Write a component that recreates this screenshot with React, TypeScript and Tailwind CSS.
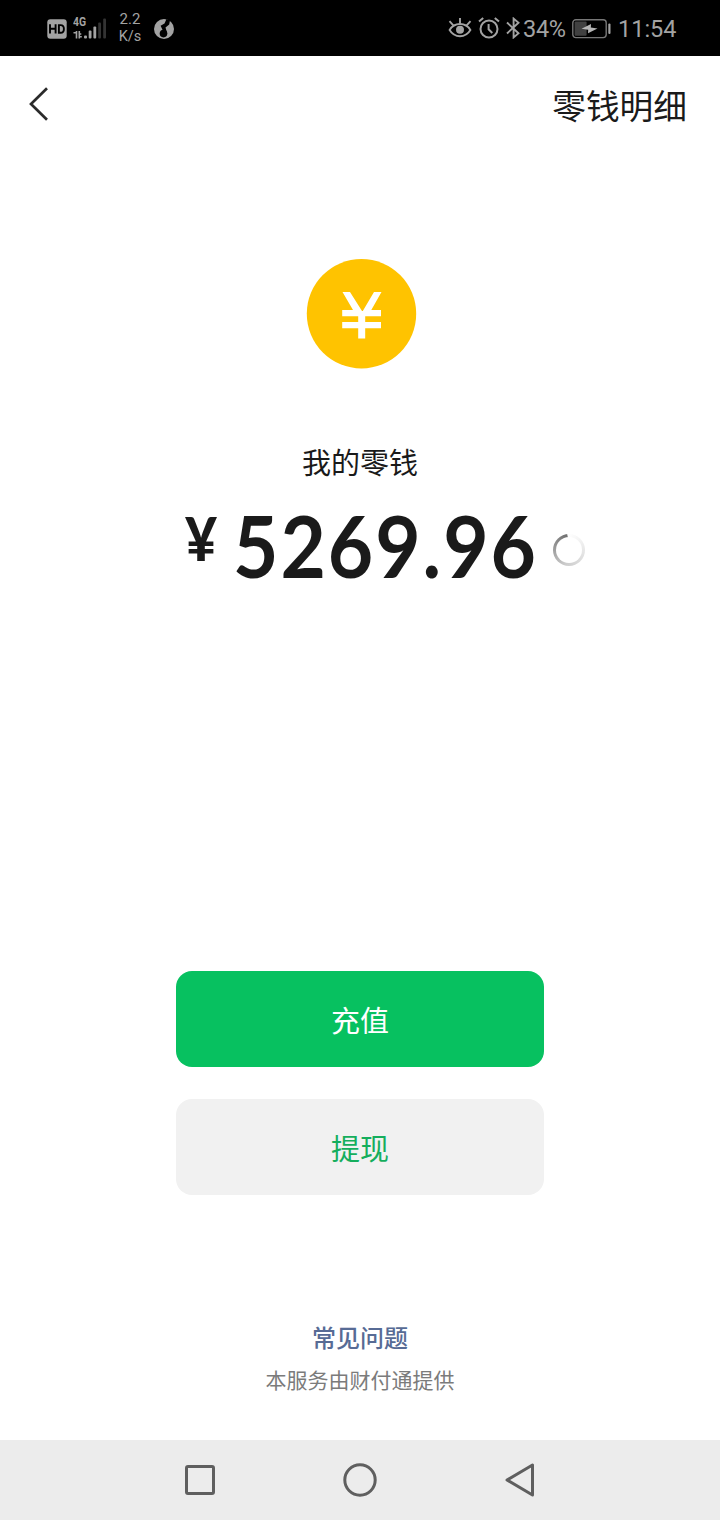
import type { ReactNode } from "react";

function HdIcon() {
  return (
    <svg className="ml-[47px] h-[20px] w-[20px] shrink-0" viewBox="0 0 20 20" fill="none">
      <rect x="0.3" y="0.3" width="19.4" height="19.4" rx="3" fill="#a3a3a3" />
      <path d="M3 5.200v9.400M8.600 5.200v9.400M3 9.800h5.600" stroke="#000" strokeWidth="1.900" />
      <path d="M11.900 6.100h1.700c2.200 0 3.300 1.200 3.300 3.800s-1.100 3.800-3.300 3.800h-1.700z" stroke="#000" strokeWidth="1.900" />
    </svg>
  );
}

function SignalIcon() {
  return (
    <div className="relative ml-[6px] h-[24px] w-[34px] shrink-0">
      <span className="absolute -top-[2px] left-0 origin-left scale-x-80 font-['Roboto',sans-serif] text-[13px] leading-[14px] font-bold text-[#a3a3a3]">
        4G
      </span>
      <svg className="h-[24px] w-[34px]" viewBox="0 0 34 24" fill="none">
        <path d="M0.500 15.800h2.500M3.500 14v7.500M6.300 14v7.500M6.300 19.800h2.500M6.300 17h2" stroke="#a3a3a3" strokeWidth="1.600" />
        <rect x="11" y="18.500" width="3" height="3" rx="1" fill="#a3a3a3" />
        <rect x="15.700" y="13.500" width="2.800" height="8" rx="1" fill="#a3a3a3" />
        <rect x="20.400" y="9.500" width="2.800" height="12" rx="1" fill="#a3a3a3" />
        <rect x="25.200" y="5.500" width="2.800" height="16" rx="1" fill="#333" />
        <rect x="30.200" y="1.500" width="2.800" height="20" rx="1" fill="#333" />
      </svg>
    </div>
  );
}

function MusicIcon() {
  return (
    <svg className="ml-[12px] h-[20px] w-[20px] shrink-0" viewBox="0 0 20 20">
      <circle cx="10" cy="10" r="10" fill="#a3a3a3" />
      <circle cx="9.500" cy="14.600" r="3.800" fill="#000" />
      <path d="M12.500 0L16 1.200 15.200 5.500 11.500 8.500 13.300 14.600 10 14 6.600 6.800 10.500 4.600z" fill="#000" />
    </svg>
  );
}

function StatusBar() {
  return (
    <header className="flex h-14 items-center bg-black pt-[2px] font-['Roboto',sans-serif] text-[#a3a3a3]">
      <HdIcon />
      <SignalIcon />
      <div className="ml-[11px] w-[24px] -translate-y-[1px] text-center text-[15px] leading-[18px]">
        <div>2.2</div>
        <div className="text-[14.500px]">K/s</div>
      </div>
      <MusicIcon />
      <div className="ml-auto flex items-center pr-[44px]">
        <svg className="h-[22px] w-[24px] -translate-y-[1px]" viewBox="0 0 24 22" fill="none" stroke="#a3a3a3" strokeWidth="1.900">
          <path d="M1.600 13C4 9 7.600 7 12 7s8 2 10.400 6c-2.400 4-6 6.200-10.400 6.200S4 17 1.600 13z" />
          <path d="M12 6.500V1M5.300 8.300L1.500 4.200M18.700 8.300l3.800-4.100" />
          <circle cx="12" cy="12.700" r="4" fill="#a3a3a3" stroke="none" />
        </svg>
        <svg className="ml-[6px] h-[22px] w-[22px] -translate-y-[1px]" viewBox="0 0 22 22" fill="none" stroke="#a3a3a3" strokeWidth="2">
          <circle cx="11" cy="12" r="8.500" />
          <path d="M10.600 7v5.300l3.700 3.700M1 4.600L5.200 1M21 4.600L16.800 1" />
        </svg>
        <svg className="ml-[6px] h-[22px] w-[15px] -translate-y-[1px]" viewBox="0 0 15 22" fill="none" stroke="#a3a3a3" strokeWidth="1.900">
          <path d="M1 5.500l11.500 10.800L7.600 20.400V1.600l4.900 4.100L1 16.500" />
        </svg>
        <span className="ml-[2px] w-[43px] text-[23.500px] leading-[28px] tracking-[-0.300px]">34%</span>
        <svg className="ml-[6px] h-[20px] w-[39px]" viewBox="0 0 39 20" fill="none">
          <rect x="0.800" y="0.800" width="33.400" height="17.800" rx="3" stroke="#777" strokeWidth="1.400" />
          <rect x="2.600" y="2.600" width="12" height="14.200" rx="1" fill="#414141" />
          <path d="M9.500 9.700l9.500-4.700-.2 3.500 6.700 1-9.500 4.700.2-3.500z" fill="#b5b5b5" />
          <rect x="36.300" y="4.500" width="2.200" height="10.500" rx="1" fill="#a3a3a3" />
        </svg>
        <span className="ml-[7px] w-[58px] text-[23.500px] leading-[28px]">11:54</span>
      </div>
    </header>
  );
}

function ActionButton({ className, children }: { className: string; children: ReactNode }) {
  return (
    <button className={`flex h-24 w-[368px] items-center justify-center rounded-[16px] pb-[1px] text-[29px] leading-[44px] ${className}`}>
      {children}
    </button>
  );
}

export default function App() {
  return (
    <div className="flex h-[1520px] w-[720px] flex-col overflow-hidden bg-white font-['Noto_Sans_CJK_SC',sans-serif] text-[#1a1a1a]">
      <StatusBar />
      <nav className="flex h-24 items-center justify-between pr-[33px] pl-[28px]">
        <svg className="h-[36px] w-[22px]" viewBox="0 0 22 36" fill="none" stroke="#2b2b2b" strokeWidth="2.700">
          <path d="M19 2.300L3 18l16 15.700" />
        </svg>
        <h1 className="pt-[2px] text-[33.700px] leading-[48px]">零钱明细</h1>
      </nav>

      <main className="flex flex-1 flex-col items-center">
        <svg className="mt-[106px] h-[112px] w-[112px] translate-x-[1.500px]" viewBox="0 0 112 112">
          <circle cx="56" cy="55.700" r="54.700" fill="#ffc300" />
          <path
            d="M37 34h7.500L56.500 53h.8L68.500 34H76L65.800 52H75.500v6.300H59.700V64H75.500v6.300H59.700V80.500H52.700V70.300H36.700V64h16v-5.700h-16V52H47.500z"
            fill="#fff"
          />
        </svg>
        <p className="mt-[69px] text-[29px] leading-[44px]">我的零钱</p>
        <div className="flex h-[92px] w-full items-start pl-[185px] font-['Lato',sans-serif] font-bold">
          <span className="mt-[23px] w-[48px] origin-left scale-x-92 text-[60px] leading-[64px] font-black">¥</span>
          <span className="mt-[16px] w-[304px] origin-left scale-x-91 text-[86px] leading-[92px] tracking-[2.200px] whitespace-nowrap">5269.96</span>
          <div className="mt-[51px] ml-[16px] h-8 w-8 rounded-full bg-[conic-gradient(from_-5deg,#ffffff_0deg,#f5f5f5_45deg,#dedede_130deg,#cccccc_200deg,#999999_285deg,#707070_358deg,#ffffff_360deg)] p-[2.800px]">
            <div className="h-full w-full rounded-full bg-white" />
          </div>
        </div>

        <div className="mt-[396px] flex flex-col gap-8">
          <ActionButton className="bg-[#07c160] text-white">充值</ActionButton>
          <ActionButton className="bg-[#f1f1f1] text-[#15ae5d]">提现</ActionButton>
        </div>

        <a className="mt-[124px] text-[24px] leading-[36px] font-medium text-[#576b95]">常见问题</a>
        <p className="mt-[8px] text-[21px] leading-[32px] text-[#7b7b7b]">本服务由财付通提供</p>
      </main>

      <footer className="flex h-20 items-center justify-center gap-[120px] bg-[#ececec]">
        <svg className="h-10 w-10" viewBox="0 0 40 40" fill="none" stroke="#5f5f5f" strokeWidth="3">
          <rect x="6.500" y="6.500" width="27" height="27" rx="1.500" />
        </svg>
        <svg className="h-10 w-10" viewBox="0 0 40 40" fill="none" stroke="#5f5f5f" strokeWidth="3">
          <circle cx="20" cy="20" r="15.200" />
        </svg>
        <svg className="h-10 w-10" viewBox="0 0 40 40" fill="none" stroke="#5f5f5f" strokeWidth="3" strokeLinejoin="round">
          <path d="M32.500 5v30L7 20z" />
        </svg>
      </footer>
    </div>
  );
}
